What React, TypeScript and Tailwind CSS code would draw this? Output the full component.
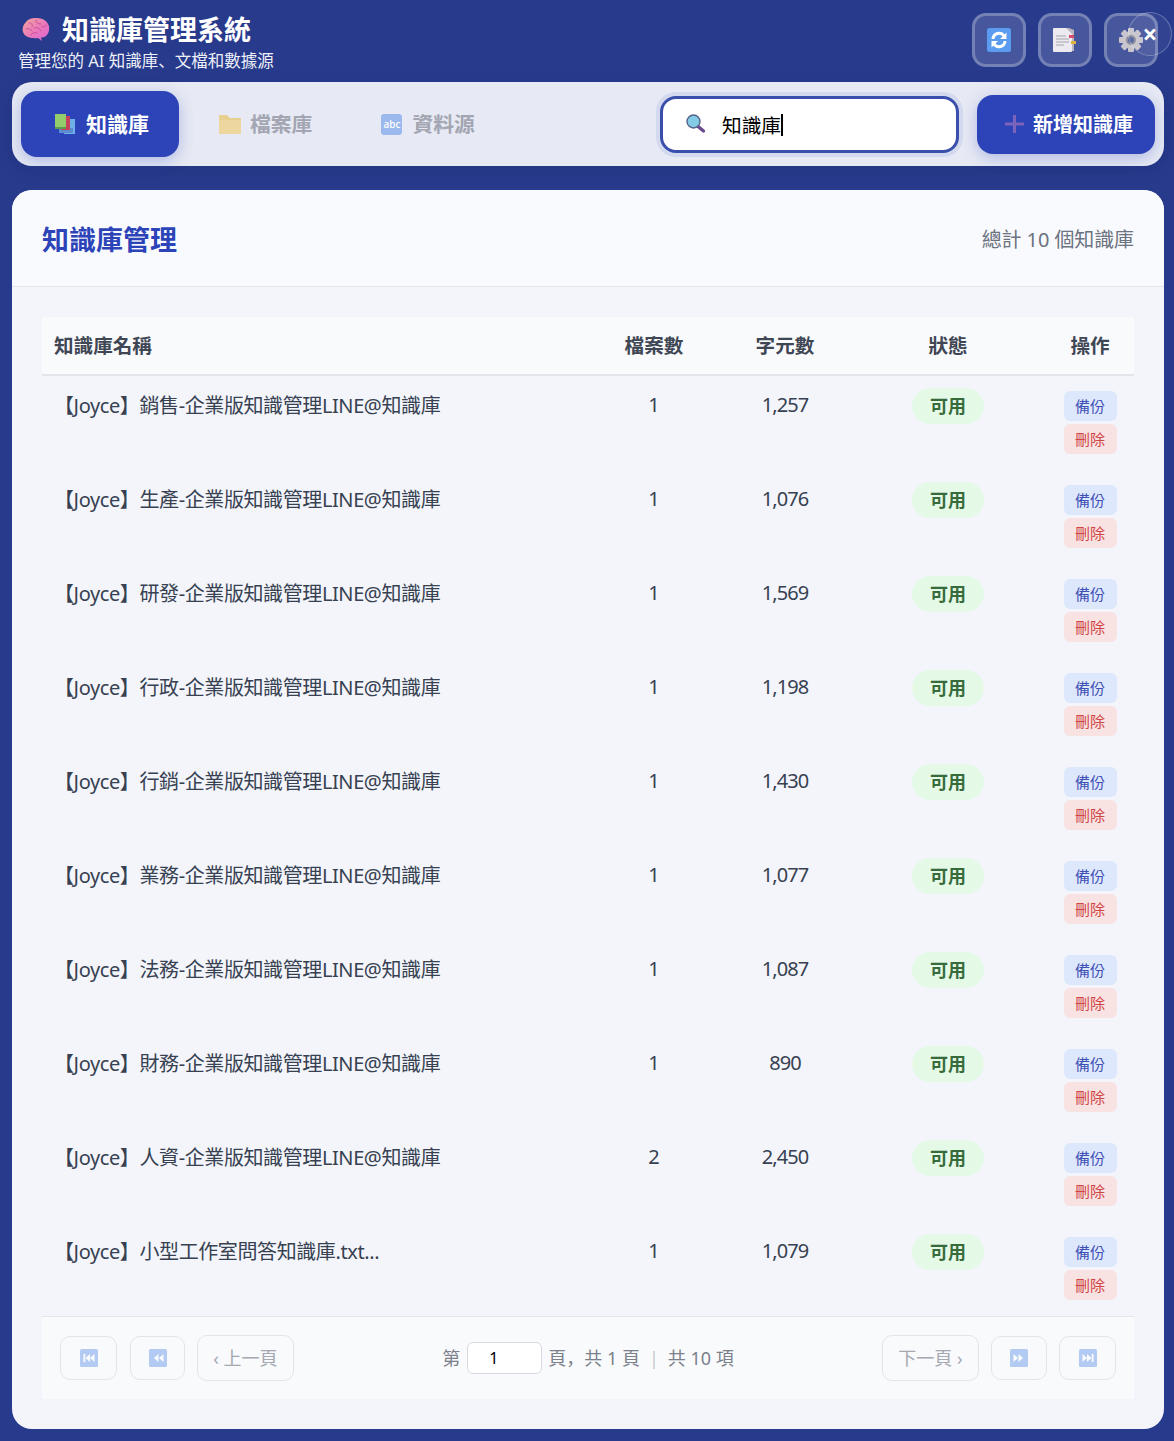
import { ReactNode } from "react";

const FONT = "font-['Noto_Sans','Noto_Sans_CJK_TC','Noto_Sans_CJK_SC',sans-serif]";

type KnowledgeBase = { name: string; files: number; chars: string };

const rows: KnowledgeBase[] = [
  { name: "【Joyce】銷售-企業版知識管理LINE@知識庫", files: 1, chars: "1,257" },
  { name: "【Joyce】生產-企業版知識管理LINE@知識庫", files: 1, chars: "1,076" },
  { name: "【Joyce】研發-企業版知識管理LINE@知識庫", files: 1, chars: "1,569" },
  { name: "【Joyce】行政-企業版知識管理LINE@知識庫", files: 1, chars: "1,198" },
  { name: "【Joyce】行銷-企業版知識管理LINE@知識庫", files: 1, chars: "1,430" },
  { name: "【Joyce】業務-企業版知識管理LINE@知識庫", files: 1, chars: "1,077" },
  { name: "【Joyce】法務-企業版知識管理LINE@知識庫", files: 1, chars: "1,087" },
  { name: "【Joyce】財務-企業版知識管理LINE@知識庫", files: 1, chars: "890" },
  { name: "【Joyce】人資-企業版知識管理LINE@知識庫", files: 2, chars: "2,450" },
  { name: "【Joyce】小型工作室問答知識庫.txt...", files: 1, chars: "1,079" },
];

const COLS = "grid grid-cols-[546px_132px_130px_196px_88px]";
const SC = "font-['Noto_Sans_CJK_SC',sans-serif]";

function BrainIcon() {
  return (
    <svg width="28" height="26" viewBox="0 0 28 26">
      <defs>
        <linearGradient id="brain" x1="0" y1="0" x2="1" y2="1">
          <stop offset="0" stopColor="#f4a49c" />
          <stop offset="0.55" stopColor="#ea78bc" />
          <stop offset="1" stopColor="#d964d4" />
        </linearGradient>
      </defs>
      <path d="M4 5C6 1.500 11 .5 15 1c5 .2 9 2 11 6 2 3 1.500 8-1 11-1.500 2-4 2.500-6 2.500L20 24l-4-3c-4 .5-9 0-12-2C1 17 0 13 1 10c.5-2 1.500-3.500 3-5z" fill="url(#brain)" />
      <path d="M7 6c3 0 4 2 3 4M14 3c0 3 2 4 5 4M4 12c3-1 5 0 6 2M12 11c3-1 6 0 7 3M20 10c2 0 4-1 5-2M9 18c1-2 3-3 6-2" stroke="#c9519f" strokeWidth="1" fill="none" strokeLinecap="round" />
    </svg>
  );
}

function BooksIcon() {
  return (
    <svg width="22" height="20" viewBox="0 0 22 20">
      <rect x="10" y="5" width="11" height="15" fill="#6fb0e8" />
      <rect x="5" y="14" width="14" height="5" fill="#5b8bd0" />
      <rect x="7" y="2" width="9" height="14" fill="#c8415a" />
      <rect x="1" y="0" width="11" height="14" fill="#92cc6c" />
      <rect x="1" y="13" width="11" height="2" fill="#5c9a50" />
    </svg>
  );
}

function FolderIcon() {
  return (
    <svg width="22" height="20" viewBox="0 0 22 20" className="opacity-50">
      <path d="M0 2a1 1 0 011-1h7l3 3h10a1 1 0 011 1v14a1 1 0 01-1 1H1a1 1 0 01-1-1z" fill="#e8b52e" />
      <path d="M0 6h22v13a1 1 0 01-1 1H1a1 1 0 01-1-1z" fill="#f3c64a" />
    </svg>
  );
}

function AbcIcon() {
  return (
    <div className="flex h-[21px] w-[21px] items-center justify-center rounded-[3px] bg-[#9cb9ee] text-[10px] font-medium leading-none text-white">
      abc
    </div>
  );
}

function SearchIcon() {
  return (
    <svg width="20" height="20" viewBox="0 0 20 20">
      <path d="M11.500 12l6 5" stroke="#6a4a8c" strokeWidth="3.400" strokeLinecap="round" />
      <circle cx="7.500" cy="7.500" r="6.500" fill="#84cbe6" stroke="#55628a" strokeWidth="1.400" />
    </svg>
  );
}

function RefreshIcon() {
  return (
    <svg width="24" height="24" viewBox="0 0 24 24">
      <rect width="24" height="24" rx="2.500" fill="#5b9bf0" />
      <path d="M6 11a6 6 0 0111-3M18 13a6 6 0 01-11 3" stroke="#fff" strokeWidth="3" fill="none" />
      <path d="M19.500 4.500v6.500H13zM4.500 19.500V13H11z" fill="#fff" />
    </svg>
  );
}

function DocIcon() {
  return (
    <svg width="24" height="26" viewBox="0 0 24 26">
      <path d="M3 1h13l5 2v21H3z" fill="#b9b6c2" />
      <path d="M0 2a1 1 0 011-1h12l6 6v17a1 1 0 01-1 1H1a1 1 0 01-1-1z" fill="#eceaf0" />
      <path d="M3 9h10M3 12h13M3 15h13M3 18h8" stroke="#a3a2ac" strokeWidth="1.200" />
      <rect x="16" y="8" width="5" height="3" fill="#d84a6c" />
      <rect x="18" y="14" width="5" height="3" fill="#e0b13c" />
    </svg>
  );
}

function GearIcon() {
  return (
    <svg width="24" height="24" viewBox="0 0 24 24">
      <g fill="#c9c5cd">
        {[0, 45, 90, 135, 180, 225, 270, 315].map((deg) => (
          <rect key={deg} x="9" y="0" width="6" height="6" rx="1" transform={`rotate(${deg} 12 12)`} />
        ))}
        <circle cx="12" cy="12" r="9" />
      </g>
      <circle cx="12" cy="12" r="5" fill="#8a8d9e" />
      <circle cx="12" cy="12" r="3" fill="#54639e" />
    </svg>
  );
}

function PlusIcon() {
  return (
    <svg width="19" height="20" viewBox="0 0 19 20">
      <path d="M9.500 1v18M0 10h19" stroke="#7a63b8" strokeWidth="3" />
    </svg>
  );
}

// kind picks the media glyph; first / prev / next / last
function MediaIcon({ kind }: { kind: "first" | "prev" | "next" | "last" }) {
  const glyph = {
    first: "M3.500 5h1.800v8H3.500zM10 5v8L5.500 9zM14.500 5v8L10 9z",
    prev: "M9.500 5v8L5 9zM14.500 5v8L10 9z",
    next: "M3.500 5v8L8 9zM8.500 5v8L13 9z",
    last: "M12.700 5h1.800v8h-1.800zM3.500 5v8L8 9zM8 5v8l4.500-4z",
  }[kind];
  return (
    <svg width="18" height="18" viewBox="0 0 18 18" className="opacity-40">
      <rect width="18" height="18" rx="1.500" fill="#4d84e8" />
      <path d={glyph} fill="#fff" />
    </svg>
  );
}

function HeaderButton({ children }: { children: ReactNode }) {
  return (
    <button className="flex h-[54px] w-[54px] items-center justify-center rounded-[14px] border-[3px] border-white/25 bg-white/15">
      {children}
    </button>
  );
}

function PageButton({ className, children }: { className: string; children: ReactNode }) {
  return (
    <button className={`flex items-center justify-center rounded-[10px] border border-[#e3e5ea] text-[18px] text-[#a4a8b0] ${className}`}>
      {children}
    </button>
  );
}

export default function App() {
  return (
    <div className={`relative h-[1441px] w-full overflow-hidden bg-[#273a8c] ${FONT}`}>
      {/* Header */}
      <header className="flex h-[82px] items-start justify-between pl-[18px] pr-[16px]">
        <div>
          <div className="flex h-[48px] items-center gap-[12px] pl-[4px] pt-[11px]">
            <div className="h-[26px]"><BrainIcon /></div>
            <h1 className="text-[27px] font-bold leading-[36px] text-white">知識庫管理系統</h1>
          </div>
          <p className="text-[16.500px] leading-[22px] text-[#eef0f8] pt-px">
            管理您的 AI 知識庫<span className={SC}>、</span>文檔和數據源
          </p>
        </div>
        <div className="mt-[13px] flex gap-[12px]">
          <HeaderButton><RefreshIcon /></HeaderButton>
          <HeaderButton><DocIcon /></HeaderButton>
          <HeaderButton><GearIcon /></HeaderButton>
        </div>
      </header>

      {/* Tabs + search */}
      <nav className="ml-3 mr-[10px] flex h-[84px] items-center rounded-[20px] bg-[#e7eaf4] px-[9px] shadow-[0_4px_20px_rgba(0,0,0,0.08)]">
        <button className="flex h-[66px] w-[158px] items-center gap-[10px] rounded-[16px] bg-[#2c44b8] pl-[33px] text-[21px] font-bold text-white shadow-[0_4px_15px_rgba(44,68,184,0.3)]">
          <BooksIcon />
          <span className="pt-[2px]">知識庫</span>
        </button>
        <button className="ml-[8px] flex h-[66px] items-center gap-[9px] px-[32px] text-[20.800px] font-bold text-[#a3a6b2]">
          <FolderIcon />
          <span className="pt-[2px]">檔案庫</span>
        </button>
        <button className="ml-[5px] flex h-[66px] items-center gap-[10px] px-[32px] text-[20.800px] font-bold text-[#a3a6b2]">
          <AbcIcon />
          <span className="pt-[2px]">資料源</span>
        </button>
        <div className="ml-auto flex h-[57px] w-[299px] items-center rounded-[16px] border-[3px] border-[#3a4fab] bg-white pl-[23px] shadow-[0_0_0_4px_rgba(44,68,184,0.1)]">
          <SearchIcon />
          <span className="ml-[16px] pt-[3px] text-[19.700px] leading-[28px] text-black">知識庫</span>
          <span className="mt-[2px] h-[22px] w-[2px] bg-black" />
        </div>
        <button className="ml-[18px] flex h-[59px] w-[178px] items-center gap-[9px] rounded-[16px] bg-[#2c44b8] pl-[28px] text-[20px] font-bold text-white shadow-[0_4px_15px_rgba(44,68,184,0.3)]">
          <PlusIcon />
          <span className="pt-[2px]">新增知識庫</span>
        </button>
      </nav>

      {/* Main card */}
      <main className="ml-3 mr-[10px] mt-[24px] h-[1239px] overflow-hidden rounded-[20px] bg-[#f3f5fb]">
        <div className="flex h-[97px] items-center justify-between border-b border-[#e3e5ec] bg-[#f9fafd] px-[30px]">
          <h2 className="pt-[5px] text-[27px] font-bold text-[#2c44b8]">知識庫管理</h2>
          <span className="pt-[3px] text-[20px] tracking-[-0.1px] text-[#6b7280]">總計 10 個知識庫</span>
        </div>

        <div className="mx-[30px] mt-[30px]">
          <div className={`${COLS} h-[59px] items-center border-b-2 border-[#e3e5ea] bg-[#f9fafc] pt-[1px] text-[19.600px] font-bold text-[#3f4654]`}>
            <div className="pl-[12px]">知識庫名稱</div>
            <div className="text-center">檔案數</div>
            <div className="text-center">字元數</div>
            <div className="text-center">狀態</div>
            <div className="text-center">操作</div>
          </div>

          {rows.map((row) => (
            <div key={row.name} className={`${COLS} h-[94px] text-[20px] text-[#374151]`}>
              <div className="pl-[12px] pt-[16px] leading-[28px] tracking-[-0.4px]">{row.name}</div>
              <div className="pt-[15px] text-center leading-[28px]">{row.files}</div>
              <div className="pt-[15px] text-center leading-[28px] tracking-[-0.9px]">{row.chars}</div>
              <div className="flex justify-center pt-[12px]">
                <span className="flex h-[36px] w-[72px] items-center justify-center rounded-[18px] bg-[#e5f9e7] text-[18px] font-bold text-[#386b3c]">可用</span>
              </div>
              <div className="flex flex-col items-center gap-[3px] pt-[15px]">
                <button className="h-[30px] w-[53px] rounded-[6px] bg-[#dee8fc] pt-[1px] text-[15px] text-[#3f51b5]">備份</button>
                <button className="h-[30px] w-[53px] rounded-[6px] bg-[#f8e2e2] pt-[1px] text-[15px] text-[#d04545]">刪除</button>
              </div>
            </div>
          ))}

          {/* Pagination */}
          <div className="flex h-[83px] items-center justify-between border-t border-[#e3e5ea] bg-[#f9fafc] px-[18px]">
            <div className="flex w-[234px] items-center">
              <PageButton className="h-[44px] w-[57px]"><MediaIcon kind="first" /></PageButton>
              <PageButton className="ml-[13px] h-[44px] w-[55px]"><MediaIcon kind="prev" /></PageButton>
              <PageButton className="ml-[12px] h-[46px] w-[97px]">‹ 上一頁</PageButton>
            </div>
            <div className="flex items-center text-[18px] text-[#7b808a]">
              <span>第</span>
              <div className="ml-[7px] mr-[6px] h-[32px] w-[75px] rounded-[6px] border border-[#d8dae0] bg-white pl-[21px] text-[16px] leading-[30px] text-black">1</div>
              <span>頁<span className={SC}>，</span>共 1 頁</span>
              <span className="mx-[9px] text-[#c5c8ce]">|</span>
              <span>共 10 項</span>
            </div>
            <div className="flex w-[234px] items-center justify-end">
              <PageButton className="h-[46px] w-[97px]">下一頁 ›</PageButton>
              <PageButton className="ml-[12px] h-[44px] w-[56px]"><MediaIcon kind="next" /></PageButton>
              <PageButton className="ml-[12px] h-[44px] w-[57px]"><MediaIcon kind="last" /></PageButton>
            </div>
          </div>
        </div>
      </main>

      {/* Floating close bubble */}
      <button className="absolute right-[2px] top-[12px] flex h-[44px] w-[44px] items-center justify-center rounded-full border border-white/25 bg-white/5 text-[26px] font-bold leading-none text-white">
        ×
      </button>
    </div>
  );
}
